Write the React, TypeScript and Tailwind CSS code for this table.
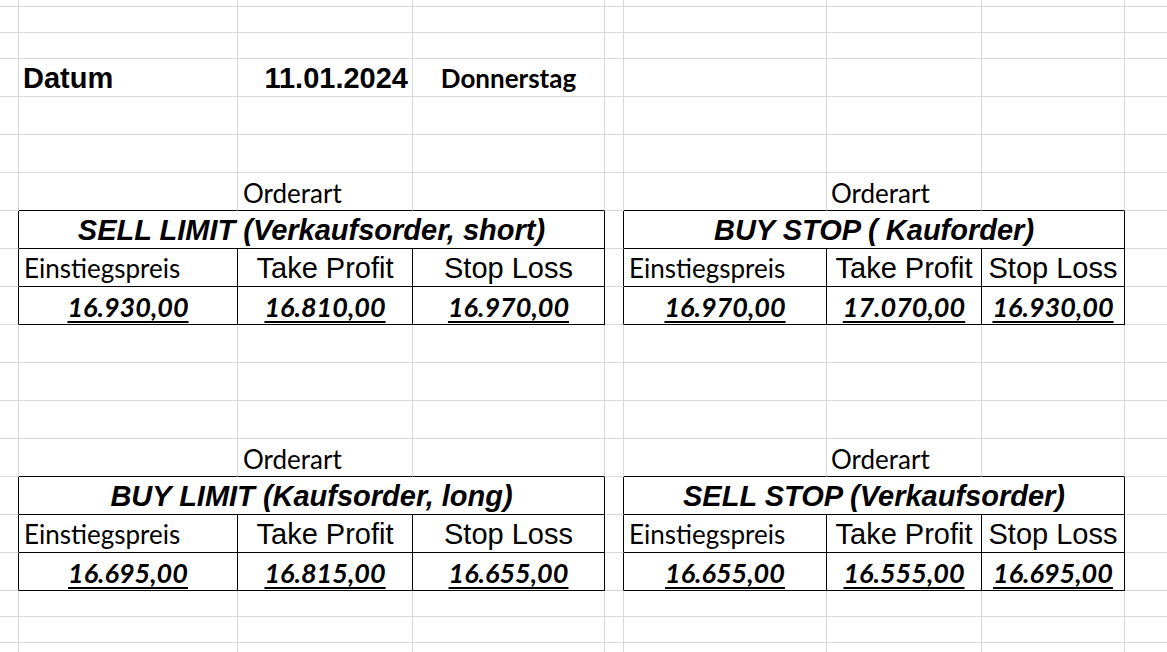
import type { ReactNode } from 'react'

const arial = "font-['Liberation_Sans',Arial,sans-serif]"
const calibri = "font-['Lato',sans-serif]"

// column widths A..I (border included)
const COLS = ['w-[19px]', 'w-[219px]', 'w-[175px]', 'w-[192px]', 'w-[19px]', 'w-[203px]', 'w-[155px]', 'w-[143px]', 'w-[240px]']

type CellProps = {
  w: string
  r?: boolean
  b?: boolean
  className?: string
  children?: ReactNode
}

function Cell({ w, r, b, className = '', children }: CellProps) {
  return (
    <div
      className={`${w} shrink-0 h-full flex items-end overflow-visible whitespace-nowrap border-r border-b ${
        r ? 'border-r-black' : 'border-r-[#d9d9d9]'
      } ${b ? 'border-b-black' : 'border-b-[#d9d9d9]'} ${className}`}
    >
      {children}
    </div>
  )
}

function EmptyRow({ h }: { h: string }) {
  return (
    <div className={`flex ${h}`}>
      {COLS.map((w, i) => (
        <Cell key={i} w={w} />
      ))}
    </div>
  )
}

type Order = {
  title: string
  entry: string
  tp: string
  sl: string
}

const value = `${calibri} text-[27px] leading-none font-bold italic underline decoration-2 underline-offset-[4px] pb-[4px] w-full text-center`
const head = `${arial} text-[29px] leading-none w-full text-center pb-[3px]`
const title = `${arial} text-[29px] leading-none font-bold italic w-full text-center pb-[3px]`

function OrderBlock({ left, right }: { left: Order; right: Order }) {
  return (
    <>
      <div className="flex h-[38px]">
        <Cell w={COLS[0]} />
        <Cell w={COLS[1]} b />
        <Cell w={COLS[2]} b>
          <span className={`${calibri} text-[26px] leading-none pl-[5px] pb-[4px]`}>Orderart</span>
        </Cell>
        <Cell w={COLS[3]} b />
        <Cell w={COLS[4]} />
        <Cell w={COLS[5]} b />
        <Cell w={COLS[6]} b>
          <span className={`${calibri} text-[26px] leading-none pl-[4px] pb-[4px]`}>Orderart</span>
        </Cell>
        <Cell w={COLS[7]} b />
        <Cell w={COLS[8]} />
      </div>

      <div className="flex h-[38px]">
        <Cell w={COLS[0]} r />
        <Cell w="w-[586px]" r b>
          <span className={title}>{left.title}</span>
        </Cell>
        <Cell w={COLS[4]} r />
        <Cell w="w-[501px]" r b>
          <span className={title}>{right.title}</span>
        </Cell>
        <Cell w={COLS[8]} />
      </div>

      <div className="flex h-[38px]">
        <Cell w={COLS[0]} r />
        <Cell w={COLS[1]} r b>
          <span className={`${calibri} text-[26px] leading-none pl-[5px] pb-[5px]`}>Einstiegspreis</span>
        </Cell>
        <Cell w={COLS[2]} r b>
          <span className={head}>Take Profit</span>
        </Cell>
        <Cell w={COLS[3]} r b>
          <span className={head}>Stop Loss</span>
        </Cell>
        <Cell w={COLS[4]} r />
        <Cell w={COLS[5]} r b>
          <span className={`${calibri} text-[26px] leading-none pl-[5px] pb-[5px]`}>Einstiegspreis</span>
        </Cell>
        <Cell w={COLS[6]} r b>
          <span className={head}>Take Profit</span>
        </Cell>
        <Cell w={COLS[7]} r b>
          <span className={head}>Stop Loss</span>
        </Cell>
        <Cell w={COLS[8]} />
      </div>

      <div className="flex h-[38px]">
        <Cell w={COLS[0]} r />
        <Cell w={COLS[1]} r b>
          <span className={value}>{left.entry}</span>
        </Cell>
        <Cell w={COLS[2]} r b>
          <span className={value}>{left.tp}</span>
        </Cell>
        <Cell w={COLS[3]} r b>
          <span className={value}>{left.sl}</span>
        </Cell>
        <Cell w={COLS[4]} r />
        <Cell w={COLS[5]} r b>
          <span className={value}>{right.entry}</span>
        </Cell>
        <Cell w={COLS[6]} r b>
          <span className={value}>{right.tp}</span>
        </Cell>
        <Cell w={COLS[7]} r b>
          <span className={value}>{right.sl}</span>
        </Cell>
        <Cell w={COLS[8]} />
      </div>
    </>
  )
}

export default function App() {
  return (
    <div className="w-[1167px] h-[652px] overflow-hidden bg-white text-black">
      <EmptyRow h="h-[7px]" />
      <EmptyRow h="h-[26px]" />
      <EmptyRow h="h-[26px]" />

      <div className="flex h-[38px]">
        <Cell w={COLS[0]} />
        <Cell w={COLS[1]}>
          <span className={`${arial} text-[29px] leading-none font-bold pl-[4px] pb-[3px]`}>Datum</span>
        </Cell>
        <Cell w={COLS[2]}>
          <span className={`${arial} text-[29px] leading-none font-bold w-full text-right pr-[4px] pb-[3px]`}>
            11.01.2024
          </span>
        </Cell>
        <Cell w={COLS[3]}>
          <span className={`${calibri} text-[26px] leading-none font-bold w-full text-center pb-[5px]`}>
            Donnerstag
          </span>
        </Cell>
        {COLS.slice(4).map((w, i) => (
          <Cell key={i} w={w} />
        ))}
      </div>

      <EmptyRow h="h-[38px]" />
      <EmptyRow h="h-[38px]" />

      <OrderBlock
        left={{ title: 'SELL LIMIT (Verkaufsorder, short)', entry: '16.930,00', tp: '16.810,00', sl: '16.970,00' }}
        right={{ title: 'BUY STOP ( Kauforder)', entry: '16.970,00', tp: '17.070,00', sl: '16.930,00' }}
      />

      <EmptyRow h="h-[38px]" />
      <EmptyRow h="h-[38px]" />
      <EmptyRow h="h-[38px]" />

      <OrderBlock
        left={{ title: 'BUY LIMIT (Kaufsorder, long)', entry: '16.695,00', tp: '16.815,00', sl: '16.655,00' }}
        right={{ title: 'SELL STOP (Verkaufsorder)', entry: '16.655,00', tp: '16.555,00', sl: '16.695,00' }}
      />

      <EmptyRow h="h-[26px]" />
      <EmptyRow h="h-[26px]" />
      <EmptyRow h="h-[26px]" />
    </div>
  )
}
